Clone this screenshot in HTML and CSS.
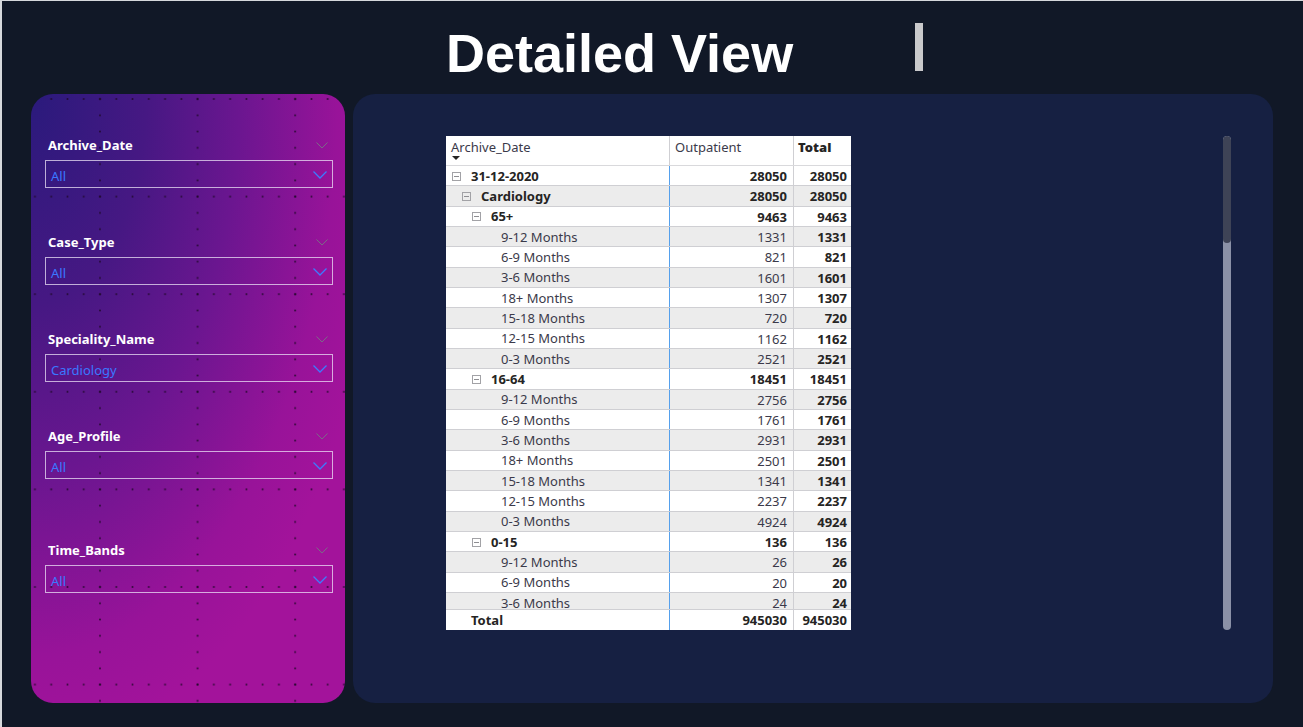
FILE: index.html
```html
<!DOCTYPE html>
<html>
<head>
<meta charset="utf-8">
<link rel="stylesheet" href="styles.css">
</head>
<body>
<div class="page">
  <header class="top">
    <h1 class="title">Detailed View</h1>
    <div class="marker"></div>
  </header>
  <main class="main">
    <aside class="filters">
      <div class="slicer">
        <div class="slicer-head"><span>Archive_Date</span><svg class="chev-dim" width="12" height="7" viewBox="0 0 12 7"><polyline points="0.5,0.5 6,6 11.5,0.5" fill="none" stroke="#7a6a86" stroke-width="1"/></svg></div>
        <div class="slicer-box"><span>All</span><svg class="chev" width="14" height="8" viewBox="0 0 14 8"><polyline points="0.5,0.5 7,7 13.5,0.5" fill="none" stroke="#3d7bff" stroke-width="1.3"/></svg></div>
      </div>
      <div class="slicer">
        <div class="slicer-head"><span>Case_Type</span><svg class="chev-dim" width="12" height="7" viewBox="0 0 12 7"><polyline points="0.5,0.5 6,6 11.5,0.5" fill="none" stroke="#7a6a86" stroke-width="1"/></svg></div>
        <div class="slicer-box"><span>All</span><svg class="chev" width="14" height="8" viewBox="0 0 14 8"><polyline points="0.5,0.5 7,7 13.5,0.5" fill="none" stroke="#3d7bff" stroke-width="1.3"/></svg></div>
      </div>
      <div class="slicer">
        <div class="slicer-head"><span>Speciality_Name</span><svg class="chev-dim" width="12" height="7" viewBox="0 0 12 7"><polyline points="0.5,0.5 6,6 11.5,0.5" fill="none" stroke="#7a6a86" stroke-width="1"/></svg></div>
        <div class="slicer-box"><span>Cardiology</span><svg class="chev" width="14" height="8" viewBox="0 0 14 8"><polyline points="0.5,0.5 7,7 13.5,0.5" fill="none" stroke="#3d7bff" stroke-width="1.3"/></svg></div>
      </div>
      <div class="slicer">
        <div class="slicer-head"><span>Age_Profile</span><svg class="chev-dim" width="12" height="7" viewBox="0 0 12 7"><polyline points="0.5,0.5 6,6 11.5,0.5" fill="none" stroke="#7a6a86" stroke-width="1"/></svg></div>
        <div class="slicer-box"><span>All</span><svg class="chev" width="14" height="8" viewBox="0 0 14 8"><polyline points="0.5,0.5 7,7 13.5,0.5" fill="none" stroke="#3d7bff" stroke-width="1.3"/></svg></div>
      </div>
      <div class="slicer slicer-last">
        <div class="slicer-head"><span>Time_Bands</span><svg class="chev-dim" width="12" height="7" viewBox="0 0 12 7"><polyline points="0.5,0.5 6,6 11.5,0.5" fill="none" stroke="#7a6a86" stroke-width="1"/></svg></div>
        <div class="slicer-box"><span>All</span><svg class="chev" width="14" height="8" viewBox="0 0 14 8"><polyline points="0.5,0.5 7,7 13.5,0.5" fill="none" stroke="#3d7bff" stroke-width="1.3"/></svg></div>
      </div>
    </aside>
    <section class="board">
      <div class="matrix">
        <div class="mrow mhead">
          <div class="c1"><span>Archive_Date</span><span class="sort"></span></div>
          <div class="c2">Outpatient</div>
          <div class="c3"><b>Total</b></div>
        </div>
        <div class="mbody">
          <div class="mrow grp"><div class="c1 l0"><span class="tog"></span>31-12-2020</div><div class="c2">28050</div><div class="c3">28050</div></div>
          <div class="mrow grp alt"><div class="c1 l1"><span class="tog"></span>Cardiology</div><div class="c2">28050</div><div class="c3">28050</div></div>
          <div class="mrow grp"><div class="c1 l2"><span class="tog"></span>65+</div><div class="c2">9463</div><div class="c3">9463</div></div>
          <div class="mrow alt"><div class="c1 l3">9-12 Months</div><div class="c2">1331</div><div class="c3">1331</div></div>
          <div class="mrow"><div class="c1 l3">6-9 Months</div><div class="c2">821</div><div class="c3">821</div></div>
          <div class="mrow alt"><div class="c1 l3">3-6 Months</div><div class="c2">1601</div><div class="c3">1601</div></div>
          <div class="mrow"><div class="c1 l3">18+ Months</div><div class="c2">1307</div><div class="c3">1307</div></div>
          <div class="mrow alt"><div class="c1 l3">15-18 Months</div><div class="c2">720</div><div class="c3">720</div></div>
          <div class="mrow"><div class="c1 l3">12-15 Months</div><div class="c2">1162</div><div class="c3">1162</div></div>
          <div class="mrow alt"><div class="c1 l3">0-3 Months</div><div class="c2">2521</div><div class="c3">2521</div></div>
          <div class="mrow grp"><div class="c1 l2"><span class="tog"></span>16-64</div><div class="c2">18451</div><div class="c3">18451</div></div>
          <div class="mrow alt"><div class="c1 l3">9-12 Months</div><div class="c2">2756</div><div class="c3">2756</div></div>
          <div class="mrow"><div class="c1 l3">6-9 Months</div><div class="c2">1761</div><div class="c3">1761</div></div>
          <div class="mrow alt"><div class="c1 l3">3-6 Months</div><div class="c2">2931</div><div class="c3">2931</div></div>
          <div class="mrow"><div class="c1 l3">18+ Months</div><div class="c2">2501</div><div class="c3">2501</div></div>
          <div class="mrow alt"><div class="c1 l3">15-18 Months</div><div class="c2">1341</div><div class="c3">1341</div></div>
          <div class="mrow"><div class="c1 l3">12-15 Months</div><div class="c2">2237</div><div class="c3">2237</div></div>
          <div class="mrow alt"><div class="c1 l3">0-3 Months</div><div class="c2">4924</div><div class="c3">4924</div></div>
          <div class="mrow grp"><div class="c1 l2"><span class="tog"></span>0-15</div><div class="c2">136</div><div class="c3">136</div></div>
          <div class="mrow alt"><div class="c1 l3">9-12 Months</div><div class="c2">26</div><div class="c3">26</div></div>
          <div class="mrow"><div class="c1 l3">6-9 Months</div><div class="c2">20</div><div class="c3">20</div></div>
          <div class="mrow alt"><div class="c1 l3">3-6 Months</div><div class="c2">24</div><div class="c3">24</div></div>
        </div>
        <div class="mrow grp mtotal"><div class="c1 l0">Total</div><div class="c2">945030</div><div class="c3">945030</div></div>
      </div>
      <div class="scroll"><div class="thumb"></div></div>
    </section>
  </main>
</div>
</body>
</html>
```
FILE: styles.css
```css
html, body {
  margin: 0;
  padding: 0;
  background: #111827;
}
.page {
  width: 1303px;
  height: 727px;
  box-sizing: border-box;
  border-top: 1px solid #d6d8dc;
  border-left: 2px solid #d6d8dc;
  background: #111827;
  overflow: hidden;
}
.top {
  height: 93px;
  box-sizing: border-box;
  display: flex;
  align-items: flex-start;
  padding-left: 444px;
}
.title {
  margin: 25px 0 0 0;
  font-family: "Liberation Sans", Arial, sans-serif;
  font-weight: 700;
  font-size: 54px;
  line-height: 54px;
  color: #ffffff;
  letter-spacing: 0;
}
.marker {
  width: 8px;
  height: 48px;
  margin-top: 22px;
  margin-left: 122px;
  background: #c9c9cb;
}
.main {
  display: flex;
  gap: 8px;
  padding-left: 29px;
}
.filters {
  width: 314px;
  height: 609px;
  box-sizing: border-box;
  border-radius: 22px;
  padding: 41px 12px 0 14px;
  display: flex;
  flex-direction: column;
  gap: 44px;
  background:
    radial-gradient(circle, rgba(30, 8, 40, 0.75) 0.7px, transparent 1.3px) -4.2px -43.8px / 16.27px 97.6px,
    radial-gradient(circle, rgba(30, 8, 40, 0.75) 0.7px, transparent 1.3px) 20.2px -3.1px / 97.6px 16.27px,
    radial-gradient(ellipse 360px 660px at 0 0, #2a1a7c 0%, #461883 32%, #6b1690 58%, #981399 85%, #a3139b 100%);
}
.slicer-last {
  margin-top: 17px;
}
.slicer-head {
  height: 20px;
  display: flex;
  align-items: center;
  justify-content: space-between;
  padding: 0 5px 0 3px;
  font-family: "Noto Sans", "DejaVu Sans", sans-serif;
  font-weight: 700;
  font-size: 13px;
  color: #ffffff;
}
.chev-dim {
  display: block;
}
.slicer-box {
  margin-top: 5px;
  height: 28px;
  box-sizing: border-box;
  border: 1px solid rgba(235, 225, 245, 0.75);
  display: flex;
  align-items: center;
  justify-content: space-between;
  padding: 4px 5px 0 5px;
  font-family: "Noto Sans", "DejaVu Sans", sans-serif;
  font-size: 13px;
  color: #3a78ff;
}
.chev {
  display: block;
  margin-top: -3px;
}
.board {
  width: 920px;
  height: 609px;
  box-sizing: border-box;
  border-radius: 22px;
  background: #162042;
  padding: 42px 0 0 93px;
  display: flex;
  align-items: flex-start;
}
.matrix {
  width: 405px;
  background: #ffffff;
  font-family: "Segoe UI", "Noto Sans", "Open Sans", sans-serif;
  font-size: 13px;
  color: #252423;
}
.mrow {
  display: grid;
  grid-template-columns: 224px 124px 57px;
  height: 20.33px;
  box-sizing: border-box;
  border-bottom: 1px solid #cfcfd3;
  line-height: 19px;
}
.mbody .mrow > div,
.mtotal > div {
  padding-top: 1px;
}
.mrow.alt {
  background: #ececec;
}
.mrow > div {
  white-space: nowrap;
  overflow: hidden;
}
.c1 {
  border-right: 1px solid #55a0ec;
  display: flex;
  align-items: center;
}
.c2 {
  text-align: right;
  padding-right: 6px;
  border-right: 1px solid #cfcfd3;
}
.c3 {
  text-align: right;
  padding-right: 4px;
  font-weight: 700;
}
.l0 { padding-left: 25px; }
.l1 { padding-left: 35px; }
.l2 { padding-left: 45px; }
.l3 { padding-left: 55px; color: #3b3a4a; }
.mrow .c2 { color: #3b3a4a; }
.grp { font-weight: 700; }
.grp .c1, .grp .c2 { color: #252423; }
.tog {
  width: 9px;
  height: 9px;
  box-sizing: border-box;
  border: 1px solid #a2a2a6;
  margin-left: -19px;
  margin-right: 10px;
  position: relative;
  flex: none;
}
.tog::after {
  content: "";
  position: absolute;
  left: 1px;
  right: 1px;
  top: 3px;
  height: 1px;
  background: #8e8e92;
}
.mhead {
  height: 30px;
  line-height: 20px;
  border-bottom: 1px solid #d9d9dc;
}
.mhead .c1 {
  border-right: 1px solid #cfcfd3;
  flex-direction: column;
  align-items: flex-start;
  justify-content: flex-start;
  padding: 1px 0 0 5px;
  color: #3b3a4a;
}
.mhead .c2 {
  text-align: left;
  padding: 1px 0 0 5px;
  color: #3b3a4a;
}
.mhead .c3 {
  text-align: left;
  padding: 1px 0 0 4px;
  color: #252423;
}
.sort {
  width: 0;
  height: 0;
  margin-left: 1px;
  margin-top: -1px;
  border-left: 4px solid transparent;
  border-right: 4px solid transparent;
  border-top: 4px solid #252423;
}
.mbody {
  height: 443px;
  overflow: hidden;
}
.mtotal {
  height: 21px;
  border-top: 1px solid #cfcfd3;
  border-bottom: none;
  background: #ffffff;
}
.mtotal .c3, .mtotal .c2 {
  color: #252423;
}
.scroll {
  width: 8px;
  height: 494px;
  margin-left: 372px;
  border-radius: 4px;
  background: #8b91a7;
  overflow: hidden;
}
.thumb {
  height: 107px;
  border-radius: 4px;
  background: #3e4356;
}
```
